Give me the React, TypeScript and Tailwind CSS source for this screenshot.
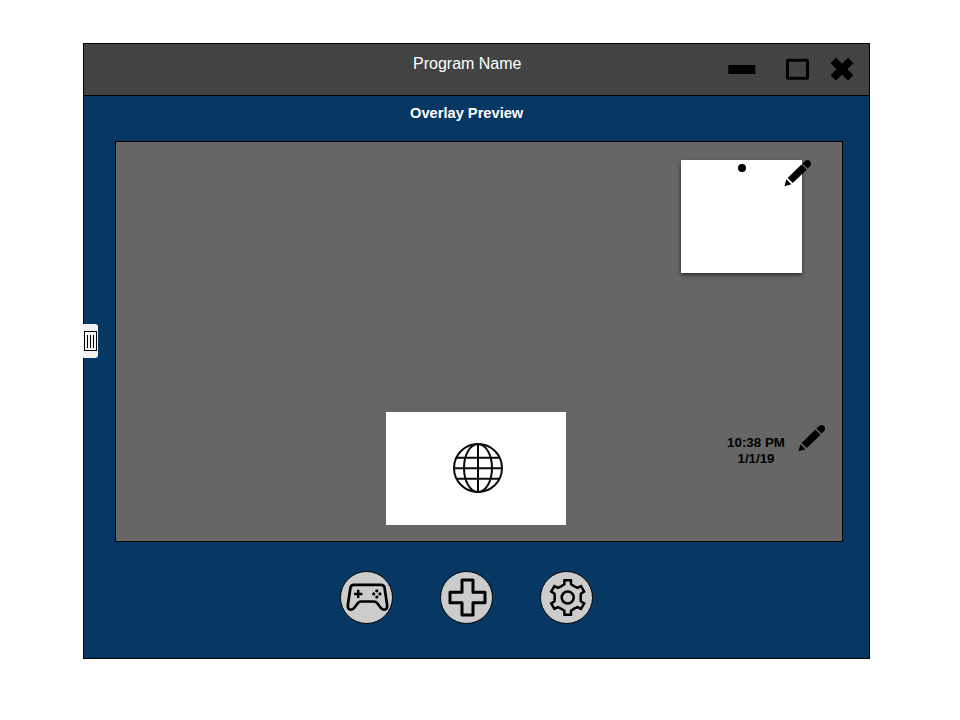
import React from "react";

function Pencil() {
  return (
    <svg className="block h-7 w-7" viewBox="0 0 28 28" fill="#000">
      <path d="M0.4 27.3 L2.4 20.2 L7.5 25.3 Z" />
      <path d="M3.6 18.9 L17.4 5.5 L22.6 10.7 L8.8 24.1 Z" />
      <path d="M18.4 4.5 L21.2 1.9 Q23.7 -0.1 25.9 1.9 Q28 4.2 26.2 6.9 L23.5 9.6 Z" />
    </svg>
  );
}

function Globe() {
  return (
    <svg className="block h-[50px] w-[50px]" viewBox="0 0 50 50" fill="none" stroke="#0b0b0b" strokeWidth="2">
      <circle cx="25" cy="25" r="24" />
      <ellipse cx="25" cy="25" rx="14" ry="24" />
      <path d="M25 1V49M1 25.3H49M3.5 14.7H46.5M3.5 35.7H46.5" />
    </svg>
  );
}

function Gamepad() {
  return (
    <svg className="block h-[50px] w-[50px]" viewBox="-0.5 -0.5 50 50" fill="none" stroke="#000">
      <path
        d="M11.2 12.3 H38.8 Q41.4 12.3 42 15 L44.6 32 Q45.2 37.1 41.6 37.2 Q39.6 37.3 38.2 35.3 L34.4 30.3 Q33.4 29 31.5 29 H18.5 Q16.6 29 15.6 30.3 L11.8 35.3 Q10.4 37.3 8.4 37.2 Q4.8 37.1 5.4 32 L8 15 Q8.6 12.3 11.2 12.3 Z"
        strokeWidth="2.7"
        strokeLinejoin="round"
      />
      <path d="M15.7 17.2V25.6M11.5 21.4H19.9" strokeWidth="2.5" />
      <g fill="#000" stroke="none">
        <circle cx="34.3" cy="18.3" r="1.6" />
        <circle cx="34.3" cy="24.5" r="1.6" />
        <circle cx="31.2" cy="21.4" r="1.6" />
        <circle cx="37.4" cy="21.4" r="1.6" />
      </g>
    </svg>
  );
}

function Plus() {
  return (
    <svg className="block h-[50px] w-[50px]" viewBox="-0.5 -0.5 50 50" fill="none" stroke="#000" strokeWidth="3" strokeLinejoin="round">
      <path d="M19.5 7.6H30.5V19.7H42.5V30.3H30.5V42.4H19.5V30.3H7.5V19.7H19.5Z" />
    </svg>
  );
}

// Six teeth, each given by the distance along and across its own axis.
const tooth = [
  [11.2, -6.5],
  [13.3, -3.4],
  [17.2, -3.2],
  [17.2, 3.2],
  [13.3, 3.4],
];
const gearPoints = [0, 60, 120, 180, 240, 300]
  .flatMap((deg) => {
    const t = (deg * Math.PI) / 180;
    return tooth.map(([r, s]) => {
      const x = 25 + r * Math.sin(t) + s * Math.cos(t);
      const y = 25 - r * Math.cos(t) + s * Math.sin(t);
      return x.toFixed(2) + "," + y.toFixed(2);
    });
  })
  .join(" ");

function Gear() {
  return (
    <svg className="block h-[50px] w-[50px]" viewBox="-0.7 -0.5 50 50" fill="none" stroke="#000" strokeWidth="2.5" strokeLinejoin="miter">
      <polygon points={gearPoints} />
      <circle cx="25" cy="25" r="6" />
    </svg>
  );
}

function RoundButton({ label, children }: { label: string; children: React.ReactNode }) {
  return (
    <button aria-label={label} className="flex h-[53px] w-[53px] items-center justify-center rounded-full border border-black bg-[#cccccc] pb-px">
      {children}
    </button>
  );
}

function TitleBar() {
  return (
    <header className="flex h-[52px] items-center border-b border-black bg-[#434343]">
      <div className="w-[329px]" />
      <h1 className="mb-3 w-[310px] text-base leading-5 text-white">Program Name</h1>
      <div className="mb-px flex items-center">
        <svg className="mx-[5px] block h-[9px] w-[28px]" viewBox="0 0 28 9">
          <rect x="0.3" width="27" height="9" />
        </svg>
        <svg className="ml-[25px] block h-[22px] w-[24px]" viewBox="0 0 24 22" fill="none" stroke="#000" strokeWidth="3">
          <rect x="1.5" y="2.2" width="20" height="18" rx="0.5" />
        </svg>
        <svg className="ml-5 block h-6 w-6" viewBox="0 0 24 24">
          <path d="M6 0.8 L12 6.8 L18 0.8 L23.4 6.2 L17.4 12.2 L23.4 18.2 L18 23.6 L12 17.6 L6 23.6 L0.6 18.2 L6.6 12.2 L0.6 6.2 Z" />
        </svg>
      </div>
    </header>
  );
}

function PreviewCanvas() {
  return (
    <section className="relative ml-[31px] h-[401px] w-[728px] border border-black bg-[#666666]">
      <div className="absolute left-[565px] top-[18px] flex h-[112.5px] w-[121.4px] justify-center bg-white pt-1 shadow-[0_2px_4px_rgba(0,0,0,0.6)]">
        <span className="block h-2 w-2 rounded-full bg-black" />
      </div>
      <div className="absolute left-[668px] top-[17px]">
        <Pencil />
      </div>
      <div className="absolute left-[270px] top-[270px] flex h-[112.5px] w-[180.4px] items-center justify-center bg-white pb-[0.6px] pl-[3px]">
        <Globe />
      </div>
      <div className="absolute left-[600px] top-[293px] w-20 text-center text-[13.33px] font-bold leading-4 text-black">
        <p>10:38 PM</p>
        <p>1/1/19</p>
      </div>
      <div className="absolute left-[682px] top-[282px]">
        <Pencil />
      </div>
    </section>
  );
}

export default function App() {
  return (
    <div className="h-[720px] w-[960px] bg-white pl-[83px] pt-[43px] font-['Liberation_Sans',Arial,sans-serif]">
      <main className="relative h-[616px] w-[787px] border border-black bg-[#073763]">
        <TitleBar />
        <h2 className="flex h-[45px] items-start pl-[326px] pt-[7px] text-[14.67px] font-bold leading-5 text-white">Overlay Preview</h2>
        <PreviewCanvas />
        <nav className="flex gap-[47px] pl-[256px] pt-[29px]">
          <RoundButton label="Games">
            <Gamepad />
          </RoundButton>
          <RoundButton label="Add">
            <Plus />
          </RoundButton>
          <RoundButton label="Settings">
            <Gear />
          </RoundButton>
        </nav>
        <div className="absolute -left-px top-[280px] flex h-[34px] w-[15px] items-center rounded-r-[3px] bg-[#f3f3f3] pl-px">
          <div className="flex h-5 w-[13px] items-center justify-center gap-[2px] border border-black">
            <span className="h-[13px] w-px bg-black" />
            <span className="h-[13px] w-px bg-black" />
            <span className="h-[13px] w-px bg-black" />
          </div>
        </div>
      </main>
    </div>
  );
}
